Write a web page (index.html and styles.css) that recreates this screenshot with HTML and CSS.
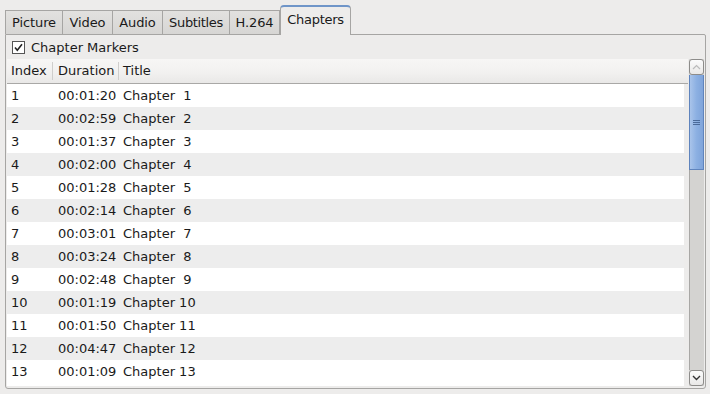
FILE: index.html
```html
<!DOCTYPE html>
<html>
  <head>
    <link rel="stylesheet" href="styles.css">
  </head>
  <body>
    <div class="window">
      <div class="tabs">
        <div class="tab t-picture">Picture</div>
        <div class="tab t-video">Video</div>
        <div class="tab t-audio">Audio</div>
        <div class="tab t-subs">Subtitles</div>
        <div class="tab t-h264">H.264</div>
        <div class="tab t-chapters active">Chapters</div>
      </div>
      <div class="panel">
        <label class="check-row">
          <span class="checkbox">
            <svg width="11" height="11" viewBox="0 0 11 11">
              <path d="M2 5.5 L4.3 8.2 L9 2.2" fill="none" stroke="#222" stroke-width="1.6"/>
            </svg>
          </span>
          <span>Chapter Markers</span>
        </label>
        <div class="tree">
          <div class="tree-main">
            <div class="head">
              <div class="col c-index">Index</div>
              <div class="col c-dur">Duration</div>
              <div class="col c-title">Title</div>
            </div>
            <div class="rows">
              <div class="row"><div class="col c-index">1</div><div class="col c-dur">00:01:20</div><div class="col c-title">Chapter  1</div></div>
              <div class="row"><div class="col c-index">2</div><div class="col c-dur">00:02:59</div><div class="col c-title">Chapter  2</div></div>
              <div class="row"><div class="col c-index">3</div><div class="col c-dur">00:01:37</div><div class="col c-title">Chapter  3</div></div>
              <div class="row"><div class="col c-index">4</div><div class="col c-dur">00:02:00</div><div class="col c-title">Chapter  4</div></div>
              <div class="row"><div class="col c-index">5</div><div class="col c-dur">00:01:28</div><div class="col c-title">Chapter  5</div></div>
              <div class="row"><div class="col c-index">6</div><div class="col c-dur">00:02:14</div><div class="col c-title">Chapter  6</div></div>
              <div class="row"><div class="col c-index">7</div><div class="col c-dur">00:03:01</div><div class="col c-title">Chapter  7</div></div>
              <div class="row"><div class="col c-index">8</div><div class="col c-dur">00:03:24</div><div class="col c-title">Chapter  8</div></div>
              <div class="row"><div class="col c-index">9</div><div class="col c-dur">00:02:48</div><div class="col c-title">Chapter  9</div></div>
              <div class="row"><div class="col c-index">10</div><div class="col c-dur">00:01:19</div><div class="col c-title">Chapter 10</div></div>
              <div class="row"><div class="col c-index">11</div><div class="col c-dur">00:01:50</div><div class="col c-title">Chapter 11</div></div>
              <div class="row"><div class="col c-index">12</div><div class="col c-dur">00:04:47</div><div class="col c-title">Chapter 12</div></div>
              <div class="row"><div class="col c-index">13</div><div class="col c-dur">00:01:09</div><div class="col c-title">Chapter 13</div></div>
            </div>
          </div>
          <div class="scrollbar">
            <div class="sb-btn">
              <svg width="9" height="6" viewBox="0 0 9 6"><path d="M1 5 L4.5 1.5 L8 5" fill="none" stroke="#bbb" stroke-width="1.2"/></svg>
            </div>
            <div class="sb-thumb">
              <svg width="7" height="7" viewBox="0 0 7 7"><path d="M0 1.5 H7 M0 3.5 H7 M0 5.5 H7" stroke="#4a6a9a" stroke-width="1"/></svg>
            </div>
            <div class="sb-trough"></div>
            <div class="sb-btn">
              <svg width="9" height="6" viewBox="0 0 9 6"><path d="M1 1 L4.5 4.5 L8 1" fill="none" stroke="#333" stroke-width="1.4"/></svg>
            </div>
          </div>
        </div>
      </div>
    </div>
  </body>
</html>
```

FILE: styles.css
```css
body {
  margin: 0;
  background-color: #edeceb;
  font-family: "DejaVu Sans", sans-serif;
  font-size: 13px;
  color: #1a1a1a;
}
.window {
  width: 710px;
  height: 394px;
  padding: 5px 4px 0 5px;
  box-sizing: border-box;
}
.tabs {
  display: flex;
  align-items: flex-end;
  height: 29px;
  position: relative;
  z-index: 1;
}
.tab {
  height: 24px;
  line-height: 23px;
  border: 1px solid #a6a5a3;
  border-bottom: none;
  margin-right: -1px;
  background: linear-gradient(#e2e1df, #d7d6d4);
  color: #1a1a1a;
  box-sizing: border-box;
  text-align: center;
  white-space: nowrap;
  letter-spacing: -0.1px;
}
.t-picture { width: 58px; }
.t-video { width: 51px; }
.t-audio { width: 51px; }
.t-subs { width: 68px; letter-spacing: -0.35px; }
.t-h264 { width: 51px; }
.tab.active {
  width: 71px;
  height: 30px;
  line-height: 26px;
  margin-left: 1px;
  margin-bottom: -1px;
  background: #edeceb;
  border-color: #a6a5a3;
  border-top: 2px solid #6f95c8;
  border-radius: 4px 4px 0 0;
  letter-spacing: -0.3px;
}
.panel {
  height: 355px;
  border: 1px solid #a6a5a3;
  border-radius: 0 2px 3px 3px;
  box-sizing: border-box;
  padding: 3px 1px 2px 1px;
  display: flex;
  flex-direction: column;
}
.check-row {
  display: flex;
  align-items: center;
  gap: 6px;
  height: 19px;
  padding-left: 5px;
}
.checkbox {
  width: 11px;
  height: 11px;
  border: 1px solid #555;
  background: #fff;
  display: flex;
}
.tree {
  flex: 1;
  display: flex;
  margin-top: 2px;
  background: #fff;
}
.tree-main {
  flex: 1;
  display: flex;
  flex-direction: column;
  background: #edeceb;
}
.head {
  display: flex;
  height: 24px;
  align-items: center;
  background: linear-gradient(#f7f6f5, #f2f1f0 55%, #e9e8e7);
  border-bottom: 1px solid #a9a8a6;
}
.head .col {
  height: 18px;
  line-height: 18px;
}
.head .c-index,
.head .c-dur {
  border-right: 1px solid #cfcecc;
}
.rows {
  flex: 1;
  background: #fff;
  margin-right: 4px;
}
.row {
  display: flex;
  height: 23px;
  line-height: 23px;
}
.row:nth-child(even) {
  background: #ededed;
}
.col {
  white-space: pre;
  box-sizing: border-box;
}
.c-index {
  width: 46px;
  padding-left: 4px;
}
.c-dur {
  width: 66px;
  padding-left: 5px;
}
.c-title {
  flex: 1;
  padding-left: 4px;
}
.scrollbar {
  width: 15px;
  display: flex;
  flex-direction: column;
  background: #d4d3d1;
  border-left: 1px solid #edeceb;
}
.sb-btn {
  height: 14px;
  border: 1px solid #8d8c8a;
  border-radius: 3px;
  background: linear-gradient(#fbfbfb, #e9e8e7);
  display: flex;
  align-items: center;
  justify-content: center;
}
.sb-thumb {
  height: 94px;
  border: 1px solid #5f84bd;
  border-top: none;
  background: linear-gradient(90deg, #a9c4ea, #8cb0e2 50%, #7fa4da);
  display: flex;
  align-items: center;
  justify-content: center;
}
.sb-trough {
  flex: 1;
  border-left: 1px solid #a8a7a5;
}
```
